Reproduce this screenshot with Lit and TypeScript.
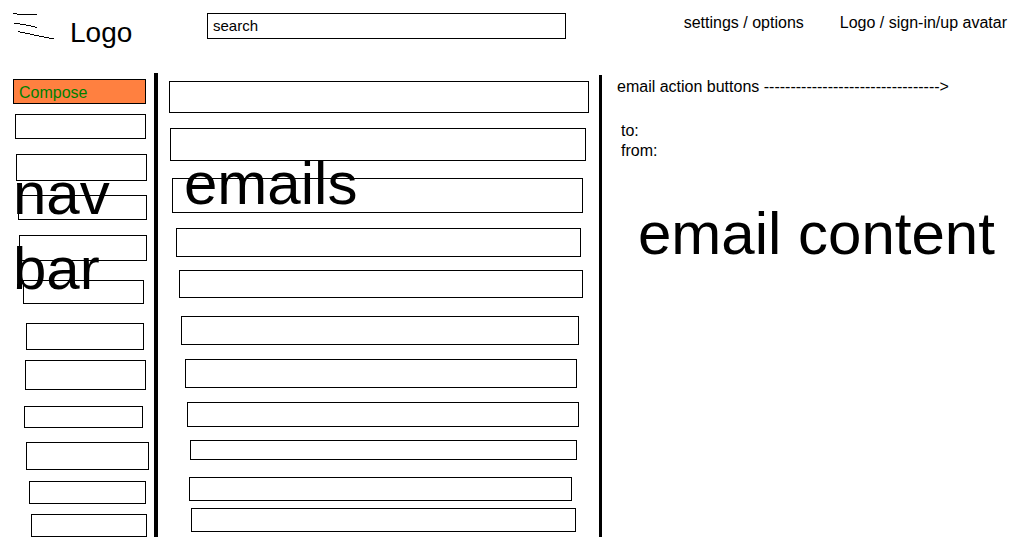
import { LitElement, html, css } from "lit";
import { customElement, property } from "lit/decorators.js";
import { styleMap } from "lit/directives/style-map.js";

/** A sketched box: gap above it, inset from each side of its column, height. */
interface Box {
  gap: number;
  left: number;
  right: number;
  height: number;
}

const box = (gap: number, left: number, right: number, height: number): Box => ({
  gap,
  left,
  right,
  height,
});

const NAV_BOXES: Box[] = [
  box(10, 15, 8, 25),
  box(15, 16, 7, 27),
  box(14, 18, 7, 25),
  box(15, 19, 7, 26),
  box(19, 23, 10, 24),
  box(19, 26, 10, 27),
  box(10, 25, 8, 30),
  box(16, 24, 11, 22),
  box(14, 26, 5, 28),
  box(11, 29, 8, 23),
  box(10, 31, 7, 23),
];

const EMAIL_BOXES: Box[] = [
  box(6, 11, 10, 32),
  box(15, 12, 13, 33),
  box(17, 14, 16, 35),
  box(15, 18, 18, 29),
  box(13, 21, 16, 28),
  box(18, 23, 20, 29),
  box(14, 27, 22, 29),
  box(14, 29, 20, 25),
  box(13, 32, 22, 20),
  box(17, 31, 27, 24),
  box(7, 33, 23, 24),
];

@customElement("box-list")
export class BoxList extends LitElement {
  @property({ attribute: false }) boxes: Box[] = [];

  static styles = css`
    :host {
      display: block;
    }
    .list {
      display: flex;
      flex-direction: column;
      margin: 0;
      padding: 0;
      list-style: none;
    }
    .item {
      box-sizing: border-box;
      border: 1px solid #000;
    }
  `;

  render() {
    return html`<ul class="list">
      ${this.boxes.map(
        (b) => html`<li
          class="item"
          style=${styleMap({
            margin: `${b.gap}px ${b.right}px 0 ${b.left}px`,
            height: `${b.height}px`,
          })}
        ></li>`
      )}
    </ul>`;
  }
}

@customElement("app-root")
export class AppRoot extends LitElement {
  static styles = css`
    :host {
      display: flex;
      flex-direction: column;
      box-sizing: border-box;
      min-height: 100vh;
      padding-bottom: 4px;
      background: #fff;
      color: #000;
      font: 16px/20px "Liberation Sans", Arial, sans-serif;
    }
    .header {
      display: grid;
      grid-template-columns: 194px 1fr auto;
      align-items: start;
      padding: 13px 13px 20px 13px;
    }
    .brand {
      display: flex;
      gap: 15px;
      font-size: 28px;
      line-height: 40px;
    }
    .menu {
      flex: none;
      width: 42px;
      height: 26px;
    }
    .search {
      box-sizing: border-box;
      width: 100%;
      height: 26px;
      margin: 0;
      padding: 0 5px 2px;
      border: 1px solid #000;
      border-radius: 0;
      background: #fff;
      color: #000;
      font: inherit;
      font-size: 15px;
    }
    .search::placeholder {
      color: #000;
      opacity: 1;
    }
    .links {
      display: flex;
      gap: 36px;
      padding-left: 118px;
      white-space: nowrap;
    }
    .link {
      color: inherit;
      text-decoration: none;
    }
    .body {
      flex: 1;
      display: grid;
      grid-template-columns: 158px 444fr 418fr;
    }
    .nav {
      position: relative;
      border-right: 4px solid #000;
      padding-top: 6px;
    }
    .compose {
      display: block;
      box-sizing: border-box;
      width: 133px;
      height: 25px;
      margin: 0 8px 0 13px;
      padding: 2px 5px 0;
      border: 1px solid #000;
      border-radius: 0;
      background: #ff8040;
      color: #008000;
      font: inherit;
      text-align: left;
    }
    .emails {
      position: relative;
      margin-top: 2px;
      border-right: 3px solid #000;
    }
    .title {
      margin: 0;
      font-size: 60px;
      font-weight: 400;
      line-height: 75px;
    }
    .over-nav {
      position: absolute;
      top: 83px;
      left: 13px;
      right: 0;
    }
    .over-emails {
      position: absolute;
      top: 71px;
      left: 26px;
    }
    .reader {
      padding: 4px 0 0 15px;
    }
    .actions {
      margin: 0;
    }
    .fields {
      margin: 24px 0 35px 4px;
    }
    .content {
      padding-left: 21px;
    }
  `;

  render() {
    return html`
      <header class="header">
        <div class="brand">
          <svg
            class="menu"
            viewBox="0 0 42 26"
            fill="none"
            stroke="#000"
            shape-rendering="crispEdges"
            aria-hidden="true"
          >
            <path d="M0 .5H4M4 1.5H24" />
            <path d="M1 10.5H7M7 11.5H13M13 12.5H18M18 13.5H22M22 14.5H24" />
            <path
              d="M5 18.5H7M7 19.5H12M12 20.5H17M17 21.5H21M21 22.5H26M26 23.5H31M31 24.5H36M36 25.5H41"
            />
          </svg>
          <span>Logo</span>
        </div>
        <input class="search" type="search" placeholder="search" aria-label="search" />
        <div class="links">
          <a class="link" href="#settings">settings / options</a>
          <a class="link" href="#account">Logo / sign-in/up avatar</a>
        </div>
      </header>
      <main class="body">
        <nav class="nav">
          <button class="compose" type="button">Compose</button>
          <box-list .boxes=${NAV_BOXES}></box-list>
          <h2 class="title over-nav">nav bar</h2>
        </nav>
        <section class="emails">
          <box-list .boxes=${EMAIL_BOXES}></box-list>
          <h2 class="title over-emails">emails</h2>
        </section>
        <article class="reader">
          <p class="actions">email action buttons ${"-".repeat(33)}&gt;</p>
          <div class="fields">
            <div>to:</div>
            <div>from:</div>
          </div>
          <h2 class="title content">email content</h2>
        </article>
      </main>
    `;
  }
}
